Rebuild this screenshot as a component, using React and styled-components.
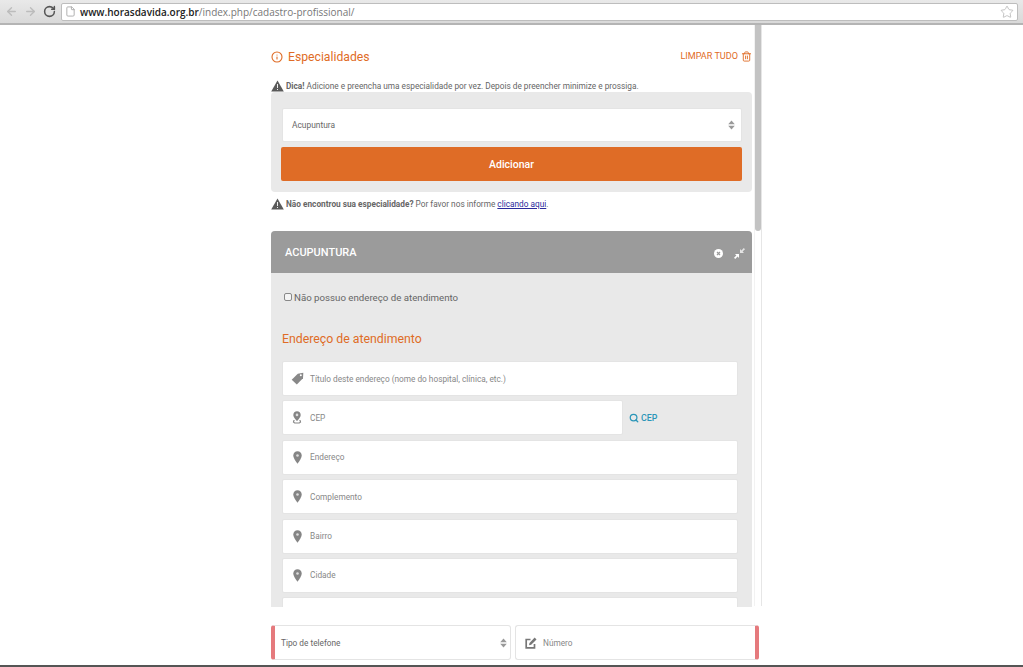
import React from 'react';
import styled, { createGlobalStyle } from 'styled-components';
import { ArrowLeft, ArrowRight, RotateCw, File, Star, Info, Trash2, Search } from 'lucide-react';

const Global = createGlobalStyle`
  html, body { margin: 0; padding: 0; width: 1023px; height: 667px; overflow: hidden; background: #fff; }
  body { font-family: Roboto, "Liberation Sans", sans-serif; color: #666; }
  * { box-sizing: border-box; }
`;
const Page = styled.div`display:flex;flex-direction:column;width:1023px;height:667px;`;
const Toolbar = styled.header`
  height:25px;flex:none;display:flex;align-items:center;padding:0 5px 1px 5px;
  background:linear-gradient(#e9e9e9,#d9d9d9);border-bottom:2px solid #b4b4b4;
`;
const NavBtn = styled.span`display:flex;width:19px;color:${p=>p.$on?'#555':'#bcbcbc'};`;
const Address = styled.div`
  margin-left:-1px;margin-top:1px;flex:1;height:18px;background:#fff;border:1px solid #bdbdbd;border-radius:2px;display:flex;align-items:center;padding:0 3px;
  font-family:"Open Sans",sans-serif;font-size:10px;color:#777;
  svg{color:#aaa;margin-right:4px;flex:none}
  b{font-weight:600;color:#222}
`;
const StarIcon = styled(Star)`margin:0 0 0 auto;color:#888;margin-right:0 !important;`;
const Viewport = styled.main`height:582px;flex:none;display:flex;padding-left:271px;overflow:hidden;`;
const Column = styled.div`width:481px;flex:none;`;
const Track = styled.div`width:8px;margin-left:2px;border-right:1px solid #e6e6e6;border-left:1px solid #f2f2f2;flex:none;height:581px;`;
const Thumb = styled.div`height:206px;width:6px;background:#c3c3c3;border-radius:0 0 3px 3px;`;
const TitleRow = styled.div`display:flex;align-items:center;height:20px;margin-top:22px;color:#df6c26;`;
const Title = styled.h2`margin:0 0 0 5px;font-size:12.2px;font-weight:400;`;
const Clear = styled.span`margin-left:auto;margin-top:-2px;display:flex;align-items:center;gap:3px;font-size:9.1px;`;
const Hint = styled.p`
  margin:${p=>p.$top}px 0 0;height:14px;display:flex;align-items:center;font-size:8.27px;color:#666;white-space:pre;
  svg{margin-right:2px;flex:none}
  b{font-weight:700}
  a{color:#2a2a9c;text-decoration:underline}
`;
const Box = styled.section`
  margin-top:-1px;height:100px;padding:16px 10px 0 10px;background:#e9e9e9;border-radius:4px;display:flex;flex-direction:column;
`;
const Select = styled.div`
  height:34px;margin-left:1px;background:#fff;border:1px solid #e4e4e4;border-radius:2px;display:flex;align-items:center;padding:0 6px 0 9px;font-size:8.4px;color:#666;
`;
const Carets = () => (
  <svg width="7" height="10" viewBox="0 0 7 10"><path d="M3.500 0.500 6.800 4.200H.2zM3.500 9.500 .2 5.800h6.600z" fill="#999"/></svg>
);
const Spacer = styled.span`flex:1;`;
const AddBtn = styled.button`
  margin-top:5px;height:34px;border:0;border-radius:2px;background:#df6c26;color:#fff;font:500 10.5px Roboto,sans-serif;
`;
const Panel = styled.section`margin-top:20px;background:#e9e9e9;border-radius:4px 4px 0 0;height:400px;`;
const PanelHead = styled.div`
  height:42px;background:#9b9b9b;border-radius:4px 4px 0 0;display:flex;align-items:center;padding:0 7px 0 14px;color:#fff;font-size:11px;font-weight:500;
`;
const HeadIcons = styled.span`margin-left:auto;display:flex;align-items:center;gap:11px;margin-top:3px;`;
const PanelBody = styled.div`padding:0 14px 0 11px;`;
const Check = styled.label`display:flex;align-items:center;height:14px;margin-top:17px;font-size:9.7px;color:#666;margin-left:2px;`;
const Box2 = styled.span`width:8px;height:8px;border:1px solid #888;border-radius:2px;background:#f4f4f4;margin-right:2px;`;
const Sub = styled.h3`margin:25px 0 0;height:20px;display:flex;align-items:center;font-weight:400;font-size:12.3px;color:#df6c26;`;
const Row = styled.div`display:flex;align-items:center;margin-top:${p=>p.$mt ?? 4.4}px;`;
const Field = styled.div`
  height:35px;width:${p=>p.$w||456}px;background:#fff;border:1px solid #e4e4e4;border-radius:2px;display:flex;align-items:center;padding-left:${p=>p.$pl||9}px;font-size:8.27px;color:#888;flex:none;
  svg{flex:none;margin-right:${p=>p.$gap||7}px}
`;
const CepLink = styled.span`display:flex;align-items:center;margin-left:6px;gap:2px;color:#2b96b8;font-size:8.8px;font-weight:500;`;
const Bottom = styled.footer`padding:18px 0 0 271px;flex:1;display:flex;flex-direction:column;justify-content:space-between;`;
const Pair = styled.div`display:flex;gap:4px;height:35px;`;
const Tel = styled.div`
  height:35px;width:${p=>p.$w}px;background:#fff;border:1px solid #e4e4e4;border-radius:3px;display:flex;align-items:center;
  ${p=>p.$side}:4px solid #e57a7d;padding:0 ${p=>p.$pr}px 0 ${p=>p.$pl}px;font-size:8.27px;color:#666;
  svg{flex:none}
`;
const TelLabel = styled.span`margin-left:${p=>p.$ml||0}px;color:${p=>p.$c||'#666'};`;
const Edge = styled.div`height:2px;background:#555;margin:0 0 0 -271px;`;

const Warn = () => (
  <svg width="13" height="12" viewBox="0 0 13 12"><path d="M6.500.5 12.800 11.500H.2z" fill="#5a5a5a"/><path d="M6 4h1v4H6zM6 9h1v1H6z" fill="#eee"/></svg>
);
const Tag = () => (
  <svg width="13" height="13" viewBox="0 0 13 13"><path d="M.7 7.800 6.800 1.700 12.300.8 12 6.300 5.800 12.400z" fill="#888"/><circle cx="9.800" cy="3.300" r="1" fill="#fff"/></svg>
);
const Pin = () => (
  <svg width="9" height="13" viewBox="0 0 9 13"><path d="M4.500.3C2 .3.3 2.200.3 4.500.3 7.500 4.500 12.700 4.500 12.700S8.700 7.500 8.700 4.500C8.700 2.200 7 .3 4.500.3z" fill="#858585"/><circle cx="4.500" cy="4.500" r="1.300" fill="#ddd"/></svg>
);
const PinBase = () => (
  <svg width="10" height="13" viewBox="0 0 10 13"><path d="M5 .3C2.800.3 1.300 1.900 1.300 3.900 1.300 6.200 5 10 5 10s3.700-3.800 3.700-6.100C8.700 1.900 7.200.3 5 .3z" fill="#858585"/><circle cx="5" cy="3.900" r="1.300" fill="#ddd"/><path d="M1.500 9 .8 11.300 2.500 12.600h5L9.200 11.300 8.500 9H7.300l.6 1.900-1 .7H3.100l-1-.7.6-1.900z" fill="#858585"/></svg>
);
const CloseDot = () => (
  <svg width="9" height="9" viewBox="0 0 9 9"><circle cx="4.500" cy="4.500" r="4.500" fill="#fff"/><path d="M3 3l3 3M6 3 3 6" stroke="#9b9b9b" strokeWidth="1.200"/></svg>
);
const Collapse = () => (
  <svg width="11" height="11" viewBox="0 0 11 11"><path d="M5 6V10L3.600 8.600 1.200 11 0 9.800 2.400 7.400 1 6z" fill="#fff"/><path d="M6 5V1L7.400 2.400 9.800 0 11 1.200 8.600 3.600 10 5z" fill="#e4e4e4"/></svg>
);
const PenBox = () => (
  <svg width="12" height="12" viewBox="0 0 12 12"><path d="M9.500 7v3.800H1.200V2.500H5.500" fill="none" stroke="#777" strokeWidth="1.700"/><path d="M4 8.200 4.500 6 9.700.6 11.500 2.400 6.200 7.700z" fill="#777"/></svg>
);

export default function App() {
  return (
    <Page>
      <Global />
      <Toolbar>
        <NavBtn><ArrowLeft size={13} strokeWidth={2.5} /></NavBtn>
        <NavBtn><ArrowRight size={13} strokeWidth={2.5} /></NavBtn>
        <NavBtn $on><RotateCw size={13} strokeWidth={2.8} /></NavBtn>
        <Address>
          <File size={11} />
          <span><b>www.horasdavida.org.br</b>/index.php/cadastro-profissional/</span>
          <StarIcon size={14} strokeWidth={1.2} />
        </Address>
      </Toolbar>
      <Viewport>
        <Column>
          <TitleRow>
            <Info size={12} strokeWidth={2.2} />
            <Title>Especialidades</Title>
            <Clear>LIMPAR TUDO <Trash2 size={11} strokeWidth={2} /></Clear>
          </TitleRow>
          <Hint $top={12}><Warn /><b>Dica!</b> Adicione e preencha uma especialidade por vez. Depois de preencher minimize e prossiga.</Hint>
          <Box>
            <Select>Acupuntura<Spacer /><Carets /></Select>
            <AddBtn>Adicionar</AddBtn>
          </Box>
          <Hint $top={5}><Warn /><b>Não encontrou sua especialidade?</b> Por favor nos informe <a href="#">clicando aqui</a>.</Hint>
          <Panel>
            <PanelHead>
              ACUPUNTURA
              <HeadIcons><CloseDot /><Collapse /></HeadIcons>
            </PanelHead>
            <PanelBody>
              <Check><Box2 />Não possuo endereço de atendimento</Check>
              <Sub>Endereço de atendimento</Sub>
              <Row $mt={12}><Field $pl={8} $gap={6}><Tag />Título deste endereço (nome do hospital, clínica, etc.)</Field></Row>
              <Row><Field $w={341} $gap={8}><PinBase />CEP</Field><CepLink><Search size={10} strokeWidth={3} />CEP</CepLink></Row>
              <Row><Field $pl={10} $gap={8}><Pin />Endereço</Field></Row>
              <Row><Field $pl={10} $gap={8}><Pin />Complemento</Field></Row>
              <Row><Field $pl={10} $gap={8}><Pin />Bairro</Field></Row>
              <Row><Field $pl={10} $gap={8}><Pin />Cidade</Field></Row>
              <Row><Field /></Row>
            </PanelBody>
          </Panel>
        </Column>
        <Track><Thumb /></Track>
      </Viewport>
      <Bottom>
        <Pair>
          <Tel $w={240} $side="border-left" $pl={6} $pr={3}>Tipo de telefone<Spacer /><Carets /></Tel>
          <Tel $w={244} $side="border-right" $pl={9} $pr={7}><PenBox /><TelLabel $ml={6} $c="#888">Número</TelLabel></Tel>
        </Pair>
        <Edge />
      </Bottom>
    </Page>
  );
}
